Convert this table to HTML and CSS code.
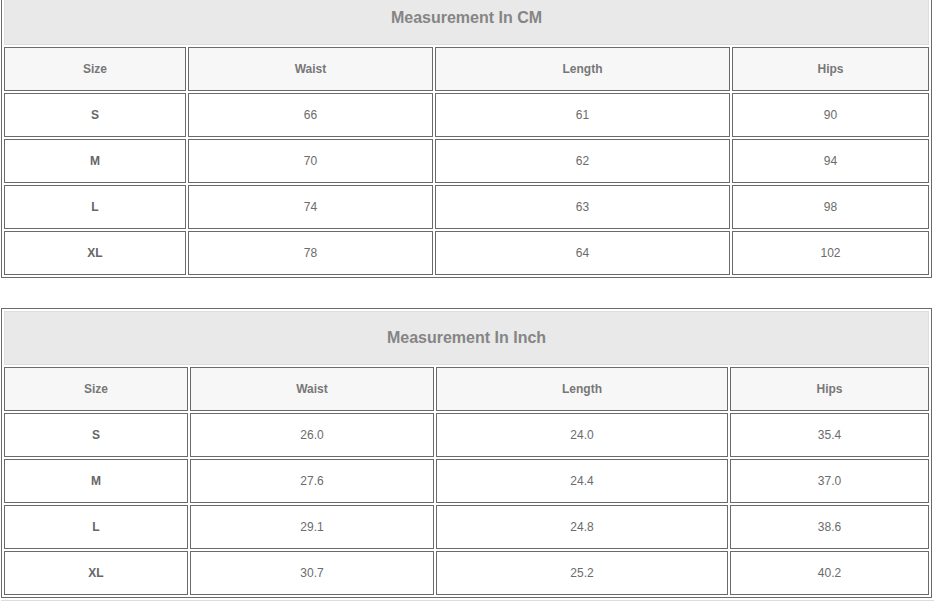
FILE: index.html
```html
<!DOCTYPE html>
<html>
<head>
<meta charset="utf-8">
<link rel="stylesheet" href="styles.css">
</head>
<body>
<div class="page">
  <table class="size-table t-cm">
    <colgroup><col class="c1"><col class="c2"><col class="c3"><col class="c4"></colgroup>
    <tr><td class="title" colspan="4">Measurement In CM</td></tr>
    <tr class="head">
      <th>Size</th><th>Waist</th><th>Length</th><th>Hips</th>
    </tr>
    <tr><th class="sz">S</th><td>66</td><td>61</td><td>90</td></tr>
    <tr><th class="sz">M</th><td>70</td><td>62</td><td>94</td></tr>
    <tr><th class="sz">L</th><td>74</td><td>63</td><td>98</td></tr>
    <tr><th class="sz">XL</th><td>78</td><td>64</td><td>102</td></tr>
  </table>

  <table class="size-table t-inch">
    <colgroup><col class="c1"><col class="c2"><col class="c3"><col class="c4"></colgroup>
    <tr><td class="title" colspan="4">Measurement In Inch</td></tr>
    <tr class="head">
      <th>Size</th><th>Waist</th><th>Length</th><th>Hips</th>
    </tr>
    <tr><th class="sz">S</th><td>26.0</td><td>24.0</td><td>35.4</td></tr>
    <tr><th class="sz">M</th><td>27.6</td><td>24.4</td><td>37.0</td></tr>
    <tr><th class="sz">L</th><td>29.1</td><td>24.8</td><td>38.6</td></tr>
    <tr><th class="sz">XL</th><td>30.7</td><td>25.2</td><td>40.2</td></tr>
  </table>
  <div class="after"></div>
</div>
</body>
</html>
```

FILE: styles.css
```css
html, body {
  margin: 0;
  padding: 0;
  background: #fff;
}
.page {
  padding-left: 1px;
  margin-top: -12px;
  font-family: "Liberation Sans", Arial, sans-serif;
}
.size-table {
  width: 931px;
  table-layout: fixed;
  border-collapse: separate;
  border-spacing: 2px;
  border: 1px solid #6a6a6a;
  margin: 0 0 30px 0;
}
.size-table td,
.size-table th {
  box-sizing: border-box;
  height: 44px;
  padding: 0;
  border: 1px solid #6a6a6a;
  text-align: center;
  vertical-align: middle;
  font-size: 12px;
  color: #6b6b6b;
  font-weight: normal;
}
.size-table td.title {
  height: 54px;
  border: 1px solid #dedede;
  background: #e9e9e9;
  font-size: 16px;
  font-weight: bold;
  color: #858585;
}
.size-table tr.head th {
  background: #f7f7f7;
  font-weight: bold;
  color: #777;
}
.size-table th.sz {
  font-weight: bold;
  color: #666;
}
.t-cm .c1 { width: 182px; }
.t-cm .c2 { width: 245px; }
.t-cm .c3 { width: 295px; }
.t-cm .c4 { width: 197px; }
.t-inch .c1 { width: 184px; }
.t-inch .c2 { width: 244px; }
.t-inch .c3 { width: 292px; }
.t-inch .c4 { width: 199px; }
.t-inch {
  margin-bottom: 2px;
}
.after {
  border-top: 1px solid #dddddd;
  height: 4px;
}
```
